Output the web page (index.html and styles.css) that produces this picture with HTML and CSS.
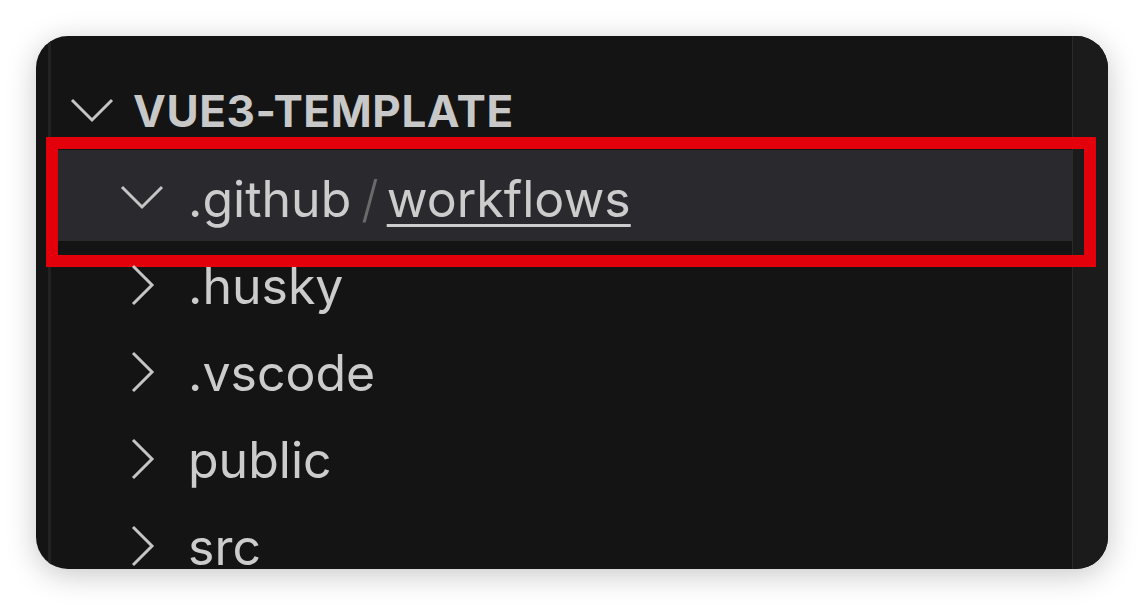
FILE: index.html
```html
<!DOCTYPE html>
<html>
<head>
<meta charset="utf-8">
<link rel="stylesheet" href="styles.css">
</head>
<body>
<div class="window">
  <div class="main">
    <div class="tree">
      <div class="row header">
        <svg class="chev" width="44" height="44" viewBox="0 0 44 44"><polyline points="2,11 22,31 42,11"/></svg>
        <span class="title">VUE3-TEMPLATE</span>
      </div>
      <div class="row child selected">
        <svg class="chev" width="44" height="44" viewBox="0 0 44 44"><polyline points="2,11 22,31 42,11"/></svg>
        <span class="name">.github</span><span class="sep">/</span><span class="name under">workflows</span>
        <div class="highlight"></div>
      </div>
      <div class="row child">
        <svg class="chev" width="44" height="44" viewBox="0 0 44 44"><polyline points="13,3 32,22 13,41"/></svg>
        <span class="name">.husky</span>
      </div>
      <div class="row child">
        <svg class="chev" width="44" height="44" viewBox="0 0 44 44"><polyline points="13,3 32,22 13,41"/></svg>
        <span class="name">.vscode</span>
      </div>
      <div class="row child">
        <svg class="chev" width="44" height="44" viewBox="0 0 44 44"><polyline points="13,3 32,22 13,41"/></svg>
        <span class="name">public</span>
      </div>
      <div class="row child">
        <svg class="chev" width="44" height="44" viewBox="0 0 44 44"><polyline points="13,3 32,22 13,41"/></svg>
        <span class="name">src</span>
      </div>
    </div>
  </div>
  <div class="strip"></div>
</div>
</body>
</html>
```
FILE: styles.css
```css
html, body {
  margin: 0;
  padding: 0;
  background: #ffffff;
}
body {
  padding: 36px 36px 0 36px;
  height: 606px;
  box-sizing: border-box;
  overflow: hidden;
  font-family: Inter, "Noto Sans", sans-serif;
}
.window {
  width: 1072px;
  height: 533px;
  background: #141414;
  border-radius: 32px;
  overflow: hidden;
  display: flex;
  box-shadow: 0 6px 30px rgba(0, 0, 0, 0.22);
}
.main {
  flex: 1;
  padding-left: 12px;
  position: relative;
  z-index: 1;
}
.tree {
  border-left: 3px solid #222222;
  height: 100%;
  padding-top: 31px;
  box-sizing: border-box;
}
.row {
  height: 87px;
  display: flex;
  align-items: center;
  position: relative;
  color: #cccccc;
}
.chev {
  flex: none;
  fill: none;
  stroke: #c5c5c5;
  stroke-width: 3;
}
.header {
  padding-left: 19px;
}
.header .chev {
  margin-right: 19px;
}
.title {
  font-weight: 700;
  font-size: 44px;
  color: #c8c8c8;
  letter-spacing: 0.6px;
}
.child {
  padding-left: 69px;
}
.child .chev {
  margin-right: 24px;
}
.name {
  font-size: 50px;
  color: #cccccc;
  line-height: 1;
  padding-top: 3px;
}
.under {
  text-decoration: underline;
  text-decoration-thickness: 3px;
  text-underline-offset: 7px;
}
.sep {
  font-size: 50px;
  font-weight: 300;
  line-height: 1;
  padding-top: 3px;
  color: #6a6a6a;
  margin: 0 8px 0 10px;
}
.selected {
  background: #2a2a2e;
  box-shadow: 0 -4px 0 #2a2a2e;
}
.highlight {
  position: absolute;
  left: -5px;
  top: -17px;
  width: 1026px;
  height: 106px;
  border: 12px solid #e3000b;
}
.strip {
  width: 35px;
  flex: none;
  background: #1b1b1b;
  border-left: 1px solid #2a2a2a;
}
```
